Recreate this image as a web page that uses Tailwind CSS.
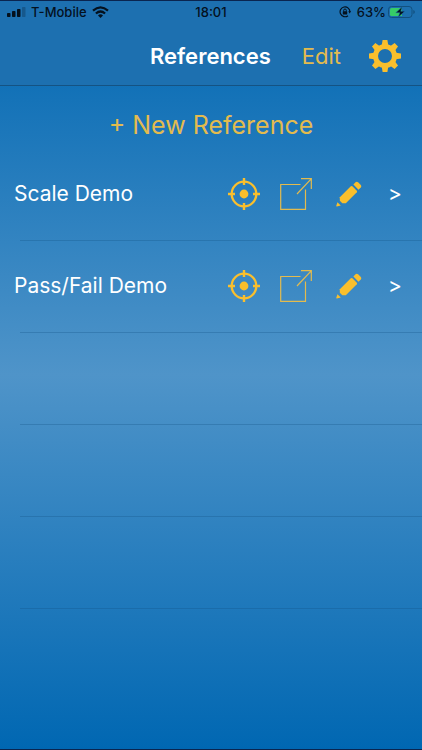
<!DOCTYPE html>
<html lang="en">
<head>
<meta charset="utf-8">
<meta name="viewport" content="width=device-width, initial-scale=1">
<title>References</title>
<script src="https://cdn.jsdelivr.net/npm/@tailwindcss/browser@4"></script>
</head>
<body class="flex min-h-screen flex-col border-y border-[#0a2550] bg-linear-to-b/srgb from-[#0067b2] via-[#4f94c9] to-[#0067b2] font-[Inter,'Liberation_Sans',sans-serif] text-white">
<svg class="hidden" aria-hidden="true">
  <symbol id="target" viewBox="0 0 32 32">
    <circle cx="16" cy="16" r="12.300" fill="none" stroke="#fabf2c" stroke-width="2.300"/>
    <circle cx="16" cy="16" r="4.400" fill="#fabf2c"/>
    <path d="M16 0v7M16 25v7M0 16h7M25 16h7" stroke="#fabf2c" stroke-width="2.400"/>
  </symbol>
  <symbol id="share" viewBox="0 0 32 32">
    <path d="M20.500 6.500H.7V31.300H25.500V11.500M17 16 31.200.8M21 .7H31.300V11" fill="none" stroke="#e3bb4e" stroke-width="1.200"/>
  </symbol>
  <symbol id="pencil" viewBox="0 0 26 26">
    <path d="M3.800 16.300 14.800 5.300q.8-.7 1.600 0l4.400 4.400q.7.800 0 1.600L9.800 22.300H6.400l-2.600-2.600z" fill="#fabf2c"/>
    <path d="M17.400 3.500 19.500 1.200q1.300-1.100 2.600 0l2.700 2.700q1.100 1.300 0 2.600l-2.300 2.200z" fill="#fabf2c"/>
    <path d="M1.400 21.300 4.800 24.600.8 25.500Q.1 25.500.3 24.700z" fill="#fabf2c"/>
  </symbol>
</svg>

<header class="border-b border-[#155383] bg-[#1d70b0]">
  <div class="grid h-[21px] grid-cols-[1fr_auto_1fr] items-center pr-[7px] pl-[7px] text-[13px] leading-5 font-medium text-[#04111e]">
    <div class="flex items-center gap-[5px]">
      <svg class="h-[10px] w-[19px]" viewBox="0 0 19 10" fill="currentColor" role="img" aria-label="Signal">
        <rect y="6" width="3.500" height="4" rx=".8"/><rect x="5" y="4" width="3.500" height="6" rx=".8"/><rect x="10" y="2" width="3.500" height="8" rx=".8"/><rect x="15" width="3.500" height="10" rx=".8" opacity=".25"/>
      </svg>
      <span>T-Mobile</span>
      <svg class="h-3 w-[17px]" viewBox="0 0 17 12" fill="none" stroke="currentColor" stroke-width="2.200" role="img" aria-label="Wi-Fi">
        <path d="M1 4.600Q8.500-2 16 4.600M3.900 7.500Q8.500 3.500 13.100 7.500"/>
        <path d="M6 9.400Q8.500 7.300 11 9.400L8.500 12z" fill="currentColor" stroke="none"/>
      </svg>
    </div>
    <time>18:01</time>
    <div class="flex items-center justify-end gap-[2px]">
      <svg class="mr-1 size-3" viewBox="0 0 12 12" fill="none" stroke="currentColor" role="img" aria-label="Rotation lock">
        <path d="M9 9.700A4.900 4.900 0 1 1 10.900 6" stroke-width="1.200"/>
        <path d="M9.300 5.300h2.700L10.700 7.500z" fill="currentColor" stroke="none"/>
        <rect x="3.800" y="5.300" width="4.400" height="3.300" rx=".5" fill="currentColor" stroke="none"/>
        <path d="M4.700 5.500V4.300a1.300 1.300 0 0 1 2.600 0v1.200"/>
      </svg>
      <span>63%</span>
      <svg class="h-3 w-[27px]" viewBox="0 0 27 12" role="img" aria-label="Charging">
        <rect x=".5" y=".5" width="23.500" height="11" rx="3" fill="none" stroke="#12507f"/>
        <path d="M25.300 4q1.500.5 1.500 2t-1.500 2z" fill="#12507f"/>
        <path d="M3.500 2H14v8H3.500Q2 10 2 8.500v-5Q2 2 3.500 2z" fill="#36cc68"/>
        <path d="M14.200.8 7.800 6.700h4L10.200 11.200 16.800 5.300h-4z" fill="#04111e" stroke="#1d70b0" stroke-width=".5"/>
      </svg>
    </div>
  </div>
  <div class="flex h-[63px] items-center justify-end pt-1 pr-[21px]">
    <h1 class="mr-[31px] text-[22px] leading-7 font-semibold">References</h1>
    <button type="button" class="mr-7 text-[22px] leading-7 text-[#e3bb4e]">Edit</button>
    <button type="button" aria-label="Settings">
      <svg class="size-8" viewBox="-16 -16 32 32" fill="#fabf2c">
        <path id="tooth" d="M-3.200-11-2.400-16H2.400L3.200-11ZM-3.200 11-2.400 16H2.400L3.200 11Z"/>
        <use href="#tooth" transform="rotate(45)"/><use href="#tooth" transform="rotate(90)"/><use href="#tooth" transform="rotate(135)"/>
        <circle r="9.500" fill="none" stroke="#fabf2c" stroke-width="5"/>
      </svg>
    </button>
  </div>
</header>

<main class="flex-1">
  <div class="flex h-[62px] items-center justify-center pt-4">
    <button type="button" class="text-[25px] leading-8 text-[#e3bb4e]">+ New Reference</button>
  </div>
  <ul>
    <li class="flex h-[92px] items-center pr-5 pl-[14px]">
      <span class="flex-1 text-[21px] leading-7">Scale Demo</span>
      <button type="button" class="mr-5" aria-label="Target Scale Demo"><svg class="size-8"><use href="#target"/></svg></button>
      <button type="button" class="mr-6" aria-label="Share Scale Demo"><svg class="size-8"><use href="#share"/></svg></button>
      <button type="button" class="mr-[26px]" aria-label="Rename Scale Demo"><svg class="size-[26px]"><use href="#pencil"/></svg></button>
      <a href="#scale" class="text-[21px] leading-7" aria-label="Open Scale Demo">&gt;</a>
    </li>
    <li class="ml-5 border-t border-[#155383]/30" role="separator"></li>
    <li class="-mt-px flex h-[92px] items-center pr-5 pl-[14px]">
      <span class="flex-1 text-[21px] leading-7">Pass/Fail Demo</span>
      <button type="button" class="mr-5" aria-label="Target Pass/Fail Demo"><svg class="size-8"><use href="#target"/></svg></button>
      <button type="button" class="mr-6" aria-label="Share Pass/Fail Demo"><svg class="size-8"><use href="#share"/></svg></button>
      <button type="button" class="mr-[26px]" aria-label="Rename Pass/Fail Demo"><svg class="size-[26px]"><use href="#pencil"/></svg></button>
      <a href="#pass-fail" class="text-[21px] leading-7" aria-label="Open Pass/Fail Demo">&gt;</a>
    </li>
  </ul>
  <div class="ml-5" aria-hidden="true">
    <div class="h-[92px] border-t border-[#155383]/30"></div>
    <div class="h-[92px] border-t border-[#155383]/30"></div>
    <div class="h-[92px] border-t border-[#155383]/30"></div>
    <div class="border-t border-[#155383]/30"></div>
  </div>
</main>
</body>
</html>
